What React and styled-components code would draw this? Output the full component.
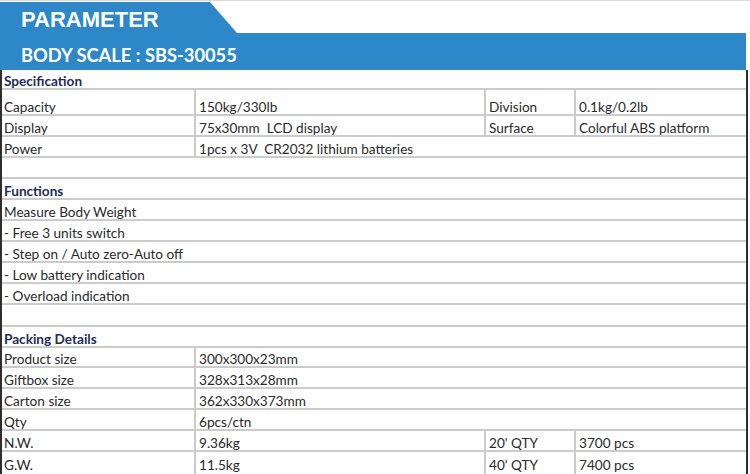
import React from "react";
import styled, { createGlobalStyle } from "styled-components";

const Global = createGlobalStyle`
  html, body { margin: 0; padding: 0; background: #fff; }
  body { width: 750px; overflow: hidden; }
`;

const Page = styled.div`
  width: 750px;
  height: 474px;
  border-top: 1px solid #dcdcdc;
  box-sizing: border-box;
  padding-top: 1px;
  display: flex;
  flex-direction: column;
  overflow: hidden;
`;

const BLUE = "#2c88c8";

const Tab = styled.div`
  width: 237px;
  height: 31px;
  background: ${BLUE};
  clip-path: polygon(0 0, 210px 0, 100% 100%, 0 100%);
  display: flex;
  align-items: center;
  padding: 5px 0 0 21px;
  box-sizing: border-box;
  font-family: "Liberation Sans", Arial, sans-serif;
  font-weight: bold;
  font-size: 22px;
  color: #fff;
`;

const Bar = styled.div`
  width: 746px;
  height: 38px;
  background: ${BLUE};
  display: flex;
  align-items: center;
  padding: 7px 0 0 21px;
  box-sizing: border-box;
  font-family: Lato, "Open Sans", sans-serif;
  font-weight: bold;
  font-size: 18.3px;
  color: #fff;
`;

const Table = styled.div`
  width: 748px;
  border-left: 2px solid #2e2e2e;
  border-right: 2px solid #2e2e2e;
  box-sizing: border-box;
  display: flex;
  flex-direction: column;
  font-family: Lato, "Open Sans", sans-serif;
  font-size: 13.6px;
  color: #2a2a2a;
`;

const Row = styled.div`
  display: grid;
  grid-template-columns: 192px 290px 90px 1fr;
  height: ${(p) => p.$h || 21}px;
  box-sizing: border-box;
  border-bottom: ${(p) => (p.$last ? "none" : "2px solid #cbcbcb")};
`;

const Cell = styled.div`
  grid-column: span ${(p) => p.$span || 1};
  display: flex;
  align-items: center;
  padding: ${(p) => p.$pt ?? 6}px 0 0 ${(p) => (p.$first ? 2 : 3)}px;
  border-left: ${(p) => (p.$first ? "none" : "2px solid #cbcbcb")};
  white-space: pre;
  overflow: hidden;
  line-height: 1;
`;

const Heading = styled(Cell)`
  font-weight: bold;
  color: #1e2d5c;
`;

function Pair({ a, b, c, d, h, pt, last }) {
  return (
    <Row $h={h} $last={last}>
      <Cell $first $pt={pt}>{a}</Cell>
      {c === undefined ? (
        <Cell $span={3} $pt={pt}>{b}</Cell>
      ) : (
        <>
          <Cell $pt={pt}>{b}</Cell>
          <Cell $pt={pt}>{c}</Cell>
          <Cell $pt={pt}>{d}</Cell>
        </>
      )}
    </Row>
  );
}

function Full({ children, heading, h }) {
  return (
    <Row $h={h}>
      {heading ? (
        <Heading $first $span={4}>{children}</Heading>
      ) : (
        <Cell $first $span={4}>{children}</Cell>
      )}
    </Row>
  );
}

export default function App() {
  return (
    <>
      <Global />
      <Page>
        <Tab>PARAMETER</Tab>
        <Bar>BODY SCALE : SBS-30055</Bar>
        <Table>
          <Full heading h={20}>Specification</Full>
          <Pair a="Capacity" b="150kg/330lb" c="Division" d="0.1kg/0.2lb" h={26} pt={11} />
          <Pair a="Display" b="75x30mm  LCD display" c="Surface" d="Colorful ABS platform" />
          <Pair a="Power" b="1pcs x 3V  CR2032 lithium batteries" />
          <Full>{""}</Full>
          <Full heading>Functions</Full>
          <Full>Measure Body Weight</Full>
          <Full>- Free 3 units switch</Full>
          <Full>- Step on / Auto zero-Auto off</Full>
          <Full>- Low battery indication</Full>
          <Full>- Overload indication</Full>
          <Full h={22}>{""}</Full>
          <Full heading>Packing Details</Full>
          <Pair a="Product size" b="300x300x23mm" h={20} />
          <Pair a="Giftbox size" b="328x313x28mm" />
          <Pair a="Carton size" b="362x330x373mm" />
          <Pair a="Qty" b="6pcs/ctn" />
          <Pair a="N.W." b="9.36kg" c="20' QTY" d="3700 pcs" />
          <Pair a="G.W." b="11.5kg" c="40' QTY" d="7400 pcs" h={22} last />
        </Table>
      </Page>
    </>
  );
}
